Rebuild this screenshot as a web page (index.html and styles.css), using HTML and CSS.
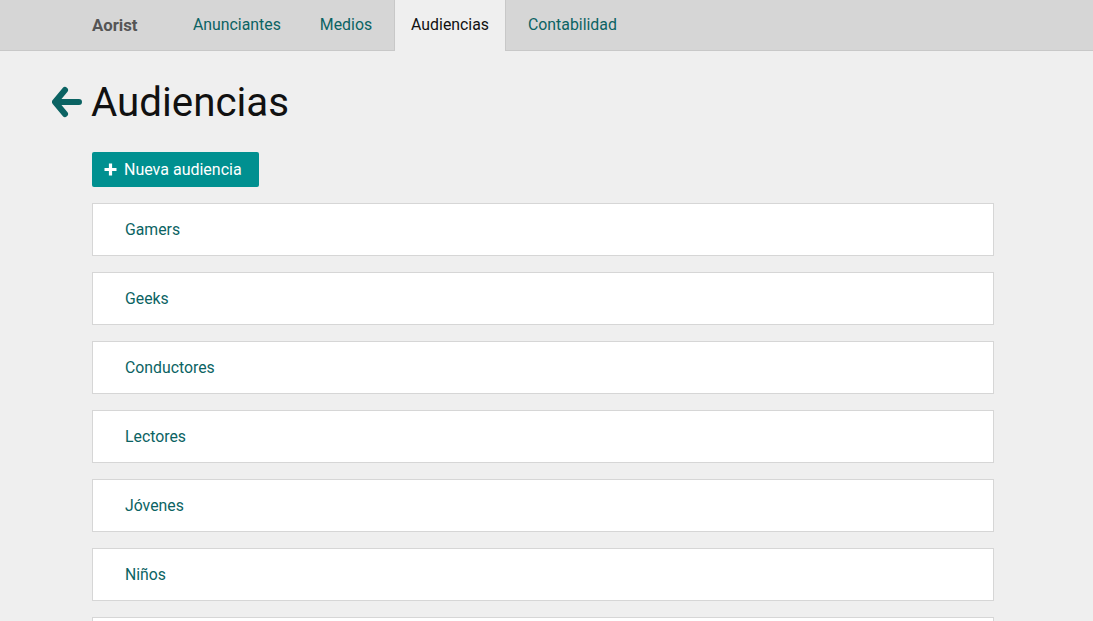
FILE: index.html
```html
<!DOCTYPE html>
<html lang="es">
<head>
<meta charset="utf-8">
<title>Audiencias</title>
<link rel="stylesheet" href="styles.css">
</head>
<body>
<nav class="navbar">
  <div class="nav-inner">
    <a class="brand" href="#">Aorist</a>
    <a class="nav-link" href="#">Anunciantes</a>
    <a class="nav-link" href="#">Medios</a>
    <a class="nav-link active" href="#">Audiencias</a>
    <a class="nav-link" href="#">Contabilidad</a>
  </div>
</nav>
<main class="page">
  <h1 class="title">
    <a class="back" href="#"><svg width="30" height="32" viewBox="0 0 30 32"><path d="M13 4 L3 16 L13 28 M4 16 H27" fill="none" stroke="#0b6363" stroke-width="6" stroke-linecap="round" stroke-linejoin="round"/></svg></a>
    <span>Audiencias</span>
  </h1>
  <div class="content">
    <a class="btn" href="#"><svg width="13" height="13" viewBox="0 0 13 13"><path d="M6.5 0.5 V12.5 M0.5 6.5 H12.5" stroke="#fff" stroke-width="3.2"/></svg>Nueva audiencia</a>
    <ul class="list">
      <li class="item"><a href="#">Gamers</a></li>
      <li class="item"><a href="#">Geeks</a></li>
      <li class="item"><a href="#">Conductores</a></li>
      <li class="item"><a href="#">Lectores</a></li>
      <li class="item"><a href="#">Jóvenes</a></li>
      <li class="item"><a href="#">Niños</a></li>
      <li class="item"></li>
    </ul>
  </div>
</main>
</body>
</html>
```
FILE: styles.css
```css
* { box-sizing: border-box; }
html, body { margin: 0; padding: 0; }
body {
  background: #efefef;
  font-family: Roboto, "Noto Sans", sans-serif;
  color: #111;
  overflow: hidden;
  height: 621px;
}
a { text-decoration: none; }
.navbar {
  background: #d6d6d6;
  border-bottom: 1px solid #c8c8c8;
  height: 51px;
}
.nav-inner {
  display: flex;
  align-items: stretch;
  height: 51px;
  padding-left: 92px;
  gap: 5px;
}
.brand {
  flex: none;
  width: 79px;
  font-weight: bold;
  color: #555;
  font-size: 16.8px;
  line-height: 50px;
}
.nav-link {
  color: #0b6363;
  font-size: 15.85px;
  line-height: 50px;
  padding: 0 16px;
  border-left: 1px solid transparent;
  border-right: 1px solid transparent;
}
.nav-link.active {
  background: #efefef;
  color: #111;
  border-left-color: #c8c8c8;
  border-right-color: #c8c8c8;
  height: 51px;
}
.page { padding: 0 0 0 52px; }
.title {
  display: flex;
  align-items: center;
  margin: 28px 0 0;
  height: 46px;
  font-weight: normal;
  font-size: 40.3px;
}
.back { display: flex; margin-right: 9px; }
.content {
  padding: 27px 0 0 40px;
  width: 942px;
}
.btn {
  display: inline-flex;
  align-items: center;
  gap: 7px;
  background: #009090;
  color: #fff;
  font-size: 16px;
  height: 35px;
  padding: 0 17px 0 12px;
  border-radius: 2px;
}
.list {
  list-style: none;
  margin: 16px 0 0;
  padding: 0;
  display: flex;
  flex-direction: column;
  gap: 16px;
}
.item {
  background: #fff;
  border: 1px solid #d6d6d6;
  height: 53px;
  flex: none;
  display: flex;
  align-items: center;
  padding-left: 32px;
}
.item a {
  color: #0b6363;
  font-size: 15.8px;
}
```
